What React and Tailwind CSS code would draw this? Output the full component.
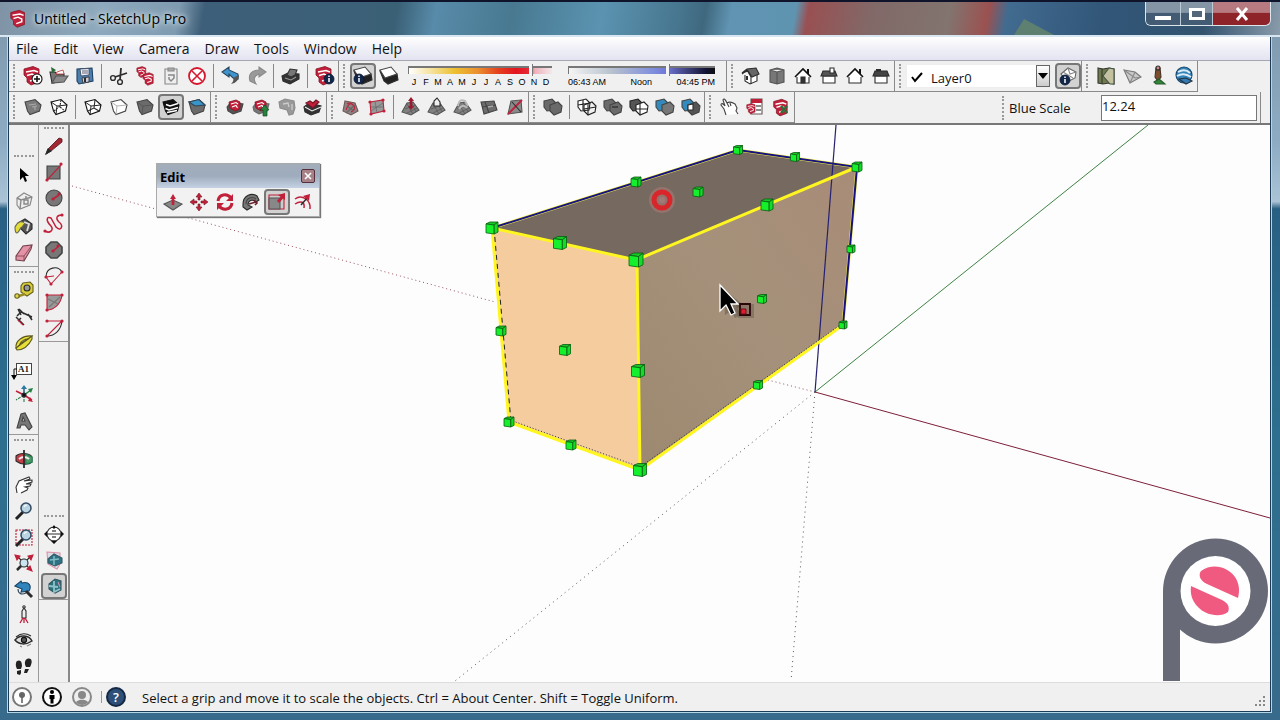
import React from "react";

const RED = "#c0203a";

const Svg = ({ children }) => (
  <svg viewBox="0 0 24 24" className="size-6 shrink-0" fill="none" stroke="#2c2c2c" strokeWidth="1.1" aria-hidden="true">
    {children}
  </svg>
);

const Slab = ({ fill = "#6b6b6b", line = "#444" }) => (
  <path d="M4 7 L14 4.500 L20 10 L18.500 16 L9 19.500 L6.500 16 Z" fill={fill} stroke={line} />
);
const SlabEdges = ({ line = "#333" }) => (
  <path d="M4 7 L10 11 L20 10 M10 11 L9 19.500" stroke={line} strokeWidth="0.9" />
);
const Mark = () => (
  <>
    <path d="M3 5 L12 2.5 L18 5 L18 18 L10 21 L6 18 L6 14 L3 11 Z" fill={RED} stroke="#851526" strokeWidth="0.8" />
    <path d="M5 8 L13 6.5 L17 8 M6 11.5 L11 10 L15 12 L15 15 L9 17" stroke="#fff" strokeWidth="1.6" />
  </>
);
const MiniMark = () => (
  <>
    <path d="M6 7 L13 5 L17 7 L17 14 L12 16 L7 13 Z" fill={RED} stroke="#851526" strokeWidth="0.8" />
    <path d="M8 9 L13 7.5 L15 9 M9 12 L13 10.5 L14.500 13" stroke="#fff" strokeWidth="1.1" />
  </>
);
const Badge = ({ x = 15, y = 15 }) => (
  <>
    <circle cx={x} cy={y} r="5" fill="#12264a" stroke="#0a1730" strokeWidth="0.8" />
    <path d={`M${x} ${y - 1} V${y + 3} M${x} ${y - 3.5} V${y - 2}`} stroke="#fff" strokeWidth="1.5" />
  </>
);
const Sheet = () => (
  <>
    <path d="M3 7 L7 17 L11 20 L21 16 L20 10 Z" fill="#222" />
    <path d="M3 6 L14 3 L20 10 L8 14 Z" fill="#fff" stroke="#444" />
  </>
);
const Terrain = () => (
  <>
    <path d="M3 17 L8 8 L14 7 L20 15 L12 20 Z" fill="#808080" stroke="#555" />
    <path d="M6 14 L17 10 M8 18 L18 13 M8 9 L14 19 M12 7 L17 17" stroke="#555" strokeWidth="0.7" />
  </>
);
const Twin = ({ a = "#6a6a6a", b = "#6a6a6a", line = "#444" }) => (
  <>
    <path d="M3 6 L11 4 L15 8 L14 15 L6 16 L3 12 Z" fill={a} stroke={line} />
    <path d="M9 10 L17 7 L21 11 L20 17 L13 20 L9 16 Z" fill={b} stroke={line} />
  </>
);
const Hand = () => (
  <path d="M9 20 L7 14 L4 10 C4 8 6 8 8 11 L6 5 C7 3 8 4 10 8 C13 6 15 7 18 9 L20 13 L19 16 L21 19 M10 8 L12 12 M13 8 L14 11" fill="#fff" stroke="#444" strokeWidth="1.1" />
);
const Pan = () => (
  <path d="M5 20 L4 14 L7 8 L17 4 L18 6 L12 8 L20 7 L20 9 L14 11 L19 11 L18 13 L13 14 L16 15 L15 17 L9 20" fill="#fff" stroke="#333" strokeWidth="1.1" />
);
const Lens = ({ x = 14, y = 9 }) => (
  <>
    <path d={`M${x - 3} ${y + 4} L${x - 10} ${y + 11}`} stroke="#222" strokeWidth="3" />
    <circle cx={x} cy={y} r="5" fill="#b9d4e3" stroke="#344a63" strokeWidth="1.5" />
    <path d={`M${x - 2} ${y - 1} q1 -2 3 -2`} stroke="#fff" />
  </>
);
const Dots = ({ pts }) => pts.map(([x, y]) => <circle key={`${x}-${y}`} cx={x} cy={y} r="1.6" fill={RED} stroke="none" />);
const House = ({ door }) => (
  <>
    <path d="M6 11 V19 H18 V11" fill="#fff" />
    <path d="M17 5 V10" stroke="#111" strokeWidth="2" />
    <path d="M4 13 L12 5 L20 13" fill="#fff" stroke="#111" strokeWidth="1.6" />
    {door && <path d="M10 19 V13 H14 V19 Z" fill={door} />}
  </>
);

const icons = {
  newDoc: <><Mark /><circle cx="16" cy="15" r="5" fill="#fff" stroke="#111" /><path d="M16 12 V18 M13 15 H19" stroke="#111" strokeWidth="1.6" /></>,
  open: <><path d="M3 8 H8 L10 10 H17 V12 L7 19 H5 Z" fill="#777" /><path d="M9 12 H21 L17 18 L5 19 Z" fill="#8b8b8b" stroke="#555" /><path d="M10 8 L16 6 L17 10 H9 Z" fill="#fff" stroke="#b33" strokeWidth="0.8" /><path d="M4 3 L9 6 L5 9 Z" fill="#286b35" stroke="none" /></>,
  save: <><path d="M4 5 L19 4 L20 17 L6 20 L4 17 Z" fill="#4d7fae" stroke="#1d3f63" /><path d="M7 5 L16 4.500 V11 L8 12 Z" fill="#eef" stroke="#345" strokeWidth="0.8" /><path d="M9 7 H15 M9 9 H15" strokeWidth="0.7" /><path d="M9 14 L16 13 V18 L10 19 Z" fill="#ccd" strokeWidth="0.8" /><path d="M12 14 V18" strokeWidth="2" /></>,
  cut: <><circle cx="6" cy="14" r="2.4" strokeWidth="1.4" /><circle cx="13" cy="18" r="2.4" strokeWidth="1.4" /><path d="M8 13 L20 9 M13 16 L14 4" strokeWidth="1.8" /></>,
  copy: <><g transform="translate(2 1) scale(.6)"><Mark /></g><g transform="translate(8 7) scale(.68)"><Mark /></g></>,
  paste: <g stroke="#888"><path d="M6 5 H18 V20 H6 Z" fill="#eee" /><path d="M9 7 H15 V4 H9 Z" fill="#aaa" /><path d="M9 11 H15 V14 L12 17 L10 15 V13" strokeWidth="1.5" /></g>,
  erase: <><circle cx="12" cy="12" r="8" fill="#fff" stroke="#d5192f" strokeWidth="1.8" /><path d="M7 7 L17 17 M17 7 L7 17" stroke="#d5192f" strokeWidth="1.6" /></>,
  undo: <><path d="M3 8 L10 3 L10 6 L19 10 L19 15 L14 14 L10 10 L10 13 Z" fill="#3f94cf" stroke="#29475f" /><path d="M14 14 L20 11 C20 16 17 19 12 20 C14 18 15 16 14 14 Z" fill="#555" stroke="none" /></>,
  redo: <path d="M21 8 L14 3 L14 6 C6 6 3 11 5 17 L11 20 C8 15 9 12 14 10 L14 13 Z" fill="#999" stroke="#8a8a8a" />,
  print: <><path d="M3 12 L9 9 L20 10 L20 15 L11 20 L4 17 Z" fill="#333" /><path d="M8 11 L11 5 L18 6 L16 11 L12 13 Z" fill="#777" stroke="#333" /><path d="M6 14 L12 16 L17 13" stroke="#999" strokeWidth="1.1" /></>,
  modelInfo: <><Mark /><Badge x={16} y={15} /></>,
  shadowInfo: <><Sheet /><Badge x={8} y={15} /></>,
  shadow: <Sheet />,
  iso: <><path d="M6 11 V17 L11 20 L18 17 V10" fill="#fff" /><path d="M3 9 L8 5 L17 4 L20 10 L13 13 L9 7 Z" fill="#666" /><path d="M3 10 L8 6 L12 13 M12 13 V20" /><path d="M8 12 V16" strokeWidth="2" /></>,
  top: <path d="M5 6 L12 4 L19 6 V18 L12 20 L5 18 Z M5 6 L12 8 L19 6 M12 8 V20" fill="#777" stroke="#555" />,
  front: <House door="#333" />,
  back: <><path d="M6 12 H18 V19 H6 Z" fill="#fff" /><path d="M4 12 L6 7 H18 L20 12 Z" fill="#555" /><path d="M13 4 H17 V9 H13 Z" fill="#fff" /></>,
  left: <House />,
  side: <><path d="M6 12 H18 V19 H6 Z" fill="#fff" /><path d="M4 12 L6 7 H18 L20 12 Z" fill="#444" /><path d="M7 6 H12" strokeWidth="2" /></>,
  layers: <><path d="M5 10 L12 4 L20 8 L19 14 L11 18 Z" fill="#fff" stroke="#666" /><path d="M7 8 L17 14 M12 4 L14 10 L20 8" stroke="#888" /><Badge x={9} y={16} /></>,
  map: <><path d="M4 4 L9 5 L15 4 L20 5 V20 L15 19 L9 20 L4 19 Z" fill="#707952" stroke="#30372b" /><path d="M15 4 L9 12 L16 20 H20 V5 Z" fill="#c3c19f" stroke="#454" /><path d="M8 5 V20" stroke="#303b25" /></>,
  terrain: <><path d="M4 6 L15 8 L21 13 L10 19 Z" fill="#c8c8c8" stroke="#777" /><path d="M4 6 L15 14 L21 13 M15 8 L10 19" stroke="#888" /></>,
  person: <><path d="M10 4 H14 L15 13 L12 17 L9 13 Z" fill="#7b4f2d" stroke="#432" /><circle cx="12" cy="4" r="2" fill="#c88" /><path d="M8 18 L13 15 L19 20 L10 20 Z" fill="#35863c" stroke="#265b2b" /></>,
  earth: <><circle cx="12" cy="11" r="8" fill="#3483b8" stroke="#15456b" /><path d="M6 8 Q13 4 18 9 M5 12 Q12 8 19 13" stroke="#dcecf5" strokeWidth="2" /><path d="M7 15 L14 14 L20 17 L14 20 Z" fill="#367ab0" stroke="#234" /></>,
  xray: <><Slab fill="#7b7b7b" /><path d="M8 10 L15 9 M11 12 L16 11 M14 12 V15" stroke="#aaa" /></>,
  backEdge: <><Slab fill="#fff" line="#111" /><SlabEdges line="#111" /><path d="M14 5 L13 11 L7 16 M13 12 L18 16" strokeDasharray="2 1" /></>,
  wire: <><Slab fill="#fff" line="#111" /><SlabEdges line="#111" /><path d="M14 5 L13 13 L7 16 M13 13 L18 16" /></>,
  hidden: <><Slab fill="#fff" /><SlabEdges line="#aaa" /></>,
  shaded: <><Slab /><SlabEdges line="#555" /></>,
  texture: <><Slab fill="#111" line="#111" /><path d="M7 9.500 L11 11 L19 8.500 M6.500 13.500 L10 15 L19 12.500 M8 17.500 L18 15.500" stroke="#fff" strokeWidth="1.4" /></>,
  mono: <><Slab /><path d="M4 7 L14 4.500 L20 10 L10 11 Z" fill="#3895c9" stroke="#345" /></>,
  getModel: <><path d="M4 12 L8 7 L20 9 L18 16 L10 19 L5 16 Z" fill="#555" stroke="#444" /><MiniMark /></>,
  share: <><path d="M4 12 L8 7 L20 9 L18 16 L10 19 L5 16 Z" fill="#777" stroke="#666" /><MiniMark /><path d="M14 21 V15 H11 L16 10 L20 15 H18 V21 Z" fill="#26813c" stroke="#164b25" strokeWidth="0.7" /></>,
  shareGray: <><path d="M4 7 L10 4 L19 6 L20 13 L18 19 L14 20 L12 15 L5 13 Z" fill="#999" stroke="#8c8c8c" /><path d="M8 9 L13 8 L14 12 M17 9 V15" stroke="#ccc" strokeWidth="1.3" /></>,
  ext: <><path d="M3 12 L8 8 L20 11 L18 17 L10 20 L4 17 Z" fill="#333" /><path d="M4 12 L11 16 L20 12" stroke="#eee" /><path d="M5 8 L9 6 L12 8 L15 5 L18 7 L12 13 Z" fill={RED} stroke="#731727" /></>,
  contours: <><path d="M6 6 L16 8 L19 16 L12 20 L4 16 Z" fill="#908383" stroke="#705757" /><path d="M7 15 Q10 6 14 10 Q18 14 12 17 M8 9 Q12 6 16 12" stroke={RED} /><path d="M8 11 L15 16 M7 18 L16 10" stroke="#666" /></>,
  scratch: <><path d="M5 7 L18 5 L19 16 L6 19 Z" fill="#999" stroke={RED} /><path d="M6 12 H19 M10 6 L12 18 M6 16 L18 8" stroke="#666" strokeWidth="0.7" /><Dots pts={[[5, 7], [18, 5], [19, 16], [6, 19]]} /></>,
  smoove: <><Terrain /><path d="M12 12 V6" stroke="#9c1930" strokeWidth="2.6" /><path d="M12 2 L15 6 H9 Z M12 15 L15 11 H9 Z" fill="#9c1930" stroke="none" /></>,
  stamp: <><Terrain /><path d="M9 11 V6 L12 3 L15 7 L15 11 Z" fill="#eee" /></>,
  drape: <><Terrain /><path d="M7 11 Q8 3 14 6 L17 11 M8 14 Q12 8 16 13" stroke="#bbb" strokeWidth="2" /></>,
  detail: <><path d="M4 7 L17 6 L20 15 L7 19 Z" fill="#6c6c6c" stroke="#444" /><path d="M5 12 L19 10 M8 7 L12 18" stroke="#444" /><path d="M11 12 L16 11" stroke="#aaa" strokeWidth="1.6" /></>,
  flip: <><path d="M8 6 L18 5 L19 17 L5 19 Z" fill="#8a8a8a" stroke="#555" /><path d="M5 19 L19 5" stroke={RED} strokeWidth="1.8" /><path d="M9 7 L18 17" /></>,
  outer: <Twin />,
  intersect: <><Twin a="#fff" b="none" line="#222" /><path d="M8 5 V15 M3 10 L15 8 M13 9 V20 M9 14 L21 12" stroke="#222" /></>,
  union: <><Twin /><path d="M11 12 H17" stroke="#222" /></>,
  subtract: <><Twin a="#555" b="#fff" line="#222" /><path d="M13 9 V20 M9 14 H21" stroke="#222" /></>,
  trim: <Twin a="#328abd" b="#777" />,
  split: <><Twin a="#328abd" b="#555" /><path d="M9 10 L14 9 V15 H9 Z" fill="#fff" /></>,
  hand: <Hand />,
  pan: <Pan />,
  options: <><path d="M8 4 H19 V19 H8 Z" fill="#fff" stroke="#655" /><path d="M8 6 H19" stroke={RED} strokeWidth="4" /><path d="M13 11 H18 M13 15 H18" stroke="#666" strokeWidth="1.4" /><g transform="translate(2 7) scale(.56)"><Mark /></g></>,
  attributes: <><g transform="translate(2 2) scale(.9)"><Mark /></g><path d="M12 11 L18 18 M18 11 L12 18" stroke="#356b3a" strokeWidth="2.600" /></>,
  pencil: <><path d="M4 20 L6 15 L17 4 L20 5 L20 8 L9 17 Z" fill="#a32633" stroke="#50151f" strokeWidth="0.8" /><path d="M4 20 L6 15 L9 17 Z" fill="#222" /></>,
  rect: <><path d="M5 6 H18 V19 H5 Z" fill="#777" stroke="#444" /><path d="M5 20 L19 5" stroke={RED} /><Dots pts={[[5, 20], [19, 4]]} /></>,
  circle: <><circle cx="12" cy="12" r="8" fill="#777" stroke="#444" /><path d="M11 13 L17 9" stroke={RED} strokeWidth="1.6" /><Dots pts={[[11, 13], [17, 8]]} /></>,
  polygon: <><path d="M9 4 H15 L20 9 V15 L15 20 H9 L4 15 V9 Z" fill="#777" stroke="#444" strokeWidth="1.600" /><path d="M11 13 L16 9" stroke={RED} strokeWidth="1.6" /><Dots pts={[[11, 13], [16, 8]]} /></>,
  freehand: <><path d="M3 19 C8 22 12 18 9 14 C3 8 5 4 9 6 L14 15 C19 20 22 14 17 10 C13 6 15 3 20 3" stroke={RED} strokeWidth="1.5" /><Dots pts={[[3, 19], [20, 3]]} /></>,
  arc: <><path d="M4 13 L9 20 L20 8 M4 13 L12 12" stroke={RED} /><path d="M4 13 C4 3 16 1 20 8" /><Dots pts={[[4, 13], [20, 8], [9, 20]]} /></>,
  pie: <><path d="M5 5 H20 C19 14 12 20 5 20 Z" fill="#999" stroke={RED} /><path d="M6 9 L16 14 M7 17 L18 7" stroke="#777" /><Dots pts={[[5, 5], [20, 5], [5, 20]]} /></>,
  arc2: <><path d="M5 5 H20 L5 20" stroke={RED} /><path d="M5 20 C13 20 19 14 20 5" /><Dots pts={[[5, 5], [20, 5], [5, 20]]} /></>,
  cursor: <path d="M8 5 V17 L11 14 L13 19 L15 18 L13 13 H17 Z" fill="#000" stroke="none" />,
  component: <><path d="M5 9 L12 4 L20 8 L18 16 L8 20 L5 16 Z" fill="#eee" stroke="#888" /><path d="M5 9 L9 11 L20 8 M9 11 L8 20" stroke="#888" strokeWidth="1.400" /><path d="M12 11 H16 V15 H12 Z M13 8 H15" stroke="#888" strokeWidth="1.400" /></>,
  paint: <><path d="M6 8 L13 4 L20 9 L20 14 L14 19 L9 14 Z" fill="#555" /><path d="M3 12 C6 6 9 6 13 8 L10 12 C7 13 8 17 5 18 C3 18 3 15 3 12 Z" fill="#e4dc38" stroke="#665" /><path d="M12 7 L17 9 L15 16" stroke="#ddd" strokeWidth="1.8" /></>,
  eraser: <><path d="M4 15 L11 5 L20 4 L19 8 L12 20 L4 19 Z" fill="#e493a6" stroke="#73404d" /><path d="M4 15 L12 15 L20 4 M12 15 V20" stroke="#73404d" strokeWidth="0.8" /></>,
  tape: <><path d="M11 4 L18 3 L21 6 V13 L15 17 L9 13 V7 Z" fill="#d9ce36" stroke="#665f20" /><circle cx="15" cy="9" r="3" fill="#999" /><path d="M13 15 L4 18" stroke="#978c25" strokeWidth="2.500" /><circle cx="5" cy="17" r="2.200" fill="#e1d84b" stroke="#665f20" /></>,
  dimension: <><path d="M5 11 L9 7 L20 12 M16 9 L20 15 M7 4 L12 9 M9 10 L6 4" strokeWidth="1.500" /><path d="M4 12 L12 20 M6 16 L9 13" strokeWidth="1.500" /><path d="M6 15 L11 20" stroke={RED} /></>,
  protractor: <><path d="M4 17 C3 10 11 4 20 5 Z" fill="#e7df38" stroke="#5d591d" /><path d="M4 17 L20 5 L20 8 C17 14 12 19 5 19 Z" fill="#e7df38" stroke="#5d591d" /><path d="M8 13 C9 10 13 8 16 8 Z" fill="#fff" stroke="#5d591d" /></>,
  axes: <><path d="M12 12 V20 M12 12 L4 17" stroke="#268049" strokeDasharray="3 1" /><path d="M12 12 V4" stroke="#245f83" strokeWidth="1.500" /><path d="M12 12 L20 17 M12 12 L4 8" stroke={RED} strokeWidth="1.500" /><path d="M12 12 L19 7" stroke="#238042" strokeWidth="1.500" /><path d="M12 2 L15 6 H9 Z" fill="#287aa4" stroke="none" /><path d="M21 19 L16 18 L18 14 Z" fill={RED} stroke="none" /><path d="M21 5 L19 10 L16 6 Z" fill="#238042" stroke="none" /><circle cx="12" cy="12" r="2" fill="#111" /></>,
  solidLetter: <path fillRule="evenodd" d="M5 19 L9 5 L13 4 L20 18 L17 21 L13 16 L9 16 L8 19 Z M10 12 L13 12 L11 8 Z" fill="#777" stroke="#444" />,
  orbit: <><path d="M4 9 C8 5 18 6 20 10 V15 C17 18 9 18 4 14 Z" fill="#c23f49" /><path d="M13 7 L20 10 V15 L14 17 Z" fill="#4b9a67" stroke="#285" /><path d="M7 12 Q12 8 17 12" stroke="#eee" strokeWidth="2" /><path d="M12 3 V21" strokeWidth="1.8" /></>,
  zoom: <Lens />,
  zoomWin: <><path d="M4 5 H20 V20 H4 Z" stroke={RED} strokeDasharray="2 1" /><Lens x={14} y={10} /></>,
  zoomExt: <><path d="M5 5 L19 19 M19 5 L5 19" /><circle cx="12" cy="12" r="4" fill="#cce3f0" /><path d="M3 4 L8 5 L5 9 Z M21 4 L16 5 L19 9 Z M20 20 L15 18 L18 15 Z" fill={RED} stroke={RED} /><path d="M9 15 L5 19" strokeWidth="2.500" /></>,
  previous: <><path d="M3 9 L9 4 L10 6 C17 4 20 9 17 14 L9 15 L10 12 Z" fill="#3284bd" stroke="#194465" /><path d="M6 12 C6 17 10 18 14 16" stroke="#345" /><path d="M14 14 L20 20" strokeWidth="3" /></>,
  camera: <><circle cx="12" cy="4" r="1.2" /><path d="M10 8 L12 5 L14 8 V15 H10 Z" fill="#eee" /><path d="M11 15 L8 20 M13 15 L16 20 M12 15 V20" stroke={RED} strokeWidth="1.3" /></>,
  eye: <><path d="M3 11 C8 5 17 6 20 12 C14 16 7 16 3 11 Z" fill="#ddd" strokeWidth="1.500" /><circle cx="12" cy="11" r="2.600" fill="#555" stroke="#111" /><path d="M4 8 Q11 2 19 7" /><path d="M8 17 L10 18 M15 17 L19 15" stroke="#888" /></>,
  walk: <g fill="#222" stroke="none"><path d="M5 6 C9 4 10 8 10 11 L9 14 L5 14 C3 10 4 7 5 6 Z M5 16 L9 15 V18 L8 20 L5 19 Z M15 4 C20 2 21 7 18 12 L14 12 C12 8 13 5 15 4 Z M13 14 L17 14 L15 18 H12 Z" /></g>,
  section: <><circle cx="12" cy="12" r="7" fill="#fff" /><path d="M4 12 H20 M12 4 V7 M12 18 V20" strokeWidth="1.2" /><path d="M2 12 L5 9 V15 Z M22 12 L19 9 V15 Z M12 3 L10 6 H14 Z M12 22 L9 19 H15 Z" fill="#111" stroke="none" /><path d="M10 9 H14 M10 15 H14" strokeWidth="1.500" stroke="#555" /></>,
  plane: <><path d="M5 4 L18 5 V16 L15 21 L6 16 Z" fill="#dcdce6" stroke="#df91a5" /><path d="M6 11 L12 6 L20 10 V15 L13 18 L6 15 Z" fill="#2f7180" stroke="#355a69" /><path d="M12 8 V17 M8 12 L17 11" stroke="#7dbbc5" strokeWidth="1.500" /></>,
  sectionCut: <><path d="M7 10 L13 5 L19 7 V16 L13 19 L7 15 Z" fill="#2b7280" stroke="#315660" /><path d="M12 7 V18 L18 15 M7 12 L16 13" stroke="#8fc2c6" strokeWidth="1.800" /><path d="M16 8 L18 13" stroke="#d58dab" /></>,
  pushPull: <><path d="M3 14 L12 10 L21 14 L12 20 Z" fill="#888" stroke="#555" /><path d="M12 15 V8" stroke={RED} strokeWidth="2.600" /><path d="M12 4 L15 9 H9 Z" fill={RED} stroke="none" /></>,
  move: <g fill={RED} stroke="#731727" strokeWidth="0.6"><path d="M12 3 L15 7 H13 V10 H11 V7 H9 Z M12 21 L9 17 H11 V14 H13 V17 H15 Z M3 12 L7 9 V11 H10 V13 H7 V15 Z M21 12 L17 15 V13 H14 V11 H17 V9 Z" /></g>,
  rotate: <><path d="M5 11 C6 4 14 3 18 8 M19 13 C18 20 10 21 6 16" stroke={RED} strokeWidth="3" /><path d="M20 4 V11 H13 Z M4 20 V13 H11 Z" fill={RED} stroke="none" /></>,
  follow: <><path d="M4 14 C4 6 12 2 18 6 L20 10 L17 12 C13 8 9 11 9 15 L13 17 L8 20 L4 17 Z" fill="#777" /><path d="M7 14 C7 8 13 6 17 9" stroke="#444" /><path d="M10 14 L17 12 M15 10 L18 13 L16 15" stroke="#6c202b" strokeWidth="1.600" /></>,
  scale: <><path d="M4 5 H19 V19 H4 Z" fill="#ccc" stroke={RED} /><path d="M4 8 H15 V19 H4 Z" fill="#888" stroke="#555" /><path d="M13 12 L19 5" stroke={RED} strokeWidth="3" /><path d="M20 3 V10 L13 5 Z" fill={RED} stroke="none" /></>,
  offset: <><path d="M4 9 C11 4 20 10 19 19 M4 14 C10 10 14 12 13 18" stroke={RED} strokeWidth="1.500" /><path d="M10 15 L17 7" strokeWidth="1.500" /><path d="M19 4 L18 11 L12 6 Z" fill={RED} stroke="none" /></>,
};

function Tool({ name, active = false }) {
  return (
    <button
      type="button"
      aria-label={name}
      aria-pressed={active}
      className={
        active
          ? "flex size-[26px] shrink-0 items-center justify-center rounded-sm border-2 border-[#777] bg-[#d2d2d2]"
          : "flex size-[26px] shrink-0 items-center justify-center"
      }
    >
      <Svg>{icons[name]}</Svg>
    </button>
  );
}

const Grip = () => <div className="mx-1 h-6 w-[3px] shrink-0 border-l-2 border-dotted border-[#999]" />;
const GripFlat = ({ tight }) => (
  <div className={(tight ? "mt-[2px] mb-1" : "mt-1 mb-[5px]") + " h-[2px] w-5 border-t-2 border-dotted border-[#999]"} />
);
const Sep = () => <div className="mx-[3px] h-6 w-[2px] shrink-0 border-l border-[#888]" />;

function Group({ tools, active, children }) {
  return (
    <div className="flex shrink-0 items-center border-r border-b border-[#8a8a8a]">
      <Grip />
      {tools && tools.map((t, i) => (t === "|" ? <Sep key={i} /> : <Tool key={i} name={t} active={t === active} />))}
      {children}
    </div>
  );
}

const sliderBase =
  "block h-3 w-full appearance-none bg-transparent [&::-webkit-slider-runnable-track]:h-2 [&::-webkit-slider-runnable-track]:border-t-2 [&::-webkit-slider-runnable-track]:border-l [&::-webkit-slider-runnable-track]:border-[#777] [&::-webkit-slider-thumb]:-mt-1 [&::-webkit-slider-thumb]:h-3 [&::-webkit-slider-thumb]:w-1 [&::-webkit-slider-thumb]:appearance-none [&::-webkit-slider-thumb]:border-r [&::-webkit-slider-thumb]:border-[#777] [&::-webkit-slider-thumb]:bg-[#f4f4f4]";

function Sliders() {
  return (
    <div className="flex gap-4 pr-[11px] pl-[6px] font-['Liberation_Sans',sans-serif] text-[9px] leading-3 font-medium text-black">
      <div className="w-36">
        <input
          type="range"
          aria-label="Date"
          min="0"
          max="100"
          defaultValue="86"
          className={sliderBase + " [&::-webkit-slider-runnable-track]:bg-[linear-gradient(90deg,#fff,#f5e3a0_15%,#ecc030_32%,#ea9030_48%,#e5431f_62%,#e3141f_75%,#e52a36_84%,#efb0ba_88%,#f3e8ea)]"}
        />
        <div className="flex">
          {"JFMAMJJASOND".split("").map((m, i) => (
            <span key={i} className="w-3 text-center">{m}</span>
          ))}
        </div>
      </div>
      <div className="w-[147px]">
        <input
          type="range"
          aria-label="Time"
          min="0"
          max="100"
          defaultValue="68"
          className={sliderBase + " [&::-webkit-slider-runnable-track]:bg-[linear-gradient(90deg,#f4f4f4,#b5c0cd_30%,#7f8ddd_58%,#7076d8_67%,#5356a0_75%,#111332_94%,#111)]"}
        />
        <div className="flex justify-between">
          <span>06:43 AM</span>
          <span>Noon</span>
          <span>04:45 PM</span>
        </div>
      </div>
    </div>
  );
}

function TitleBar() {
  return (
    <header className="relative flex h-[37px] items-center border-t-2 border-b-2 border-t-[#10142b] border-b-[#d7e6f0] bg-[linear-gradient(100deg,#7f93a5_0%,#8ea9bd_8%,#7f9bb0_14%,#3e5f79_16%,#3a6076_31%,#588ba9_34%,#487991_40%,#5b93b0_47%,#47768f_53%,#3f687e_55%,#6094b2_57%,#5f94b1_62%,#995052_63%,#816968_68%,#82746f_74%,#9b5150_77%,#426b90_78.500%,#315678_86%,#33536f_94%,#8a9cab_100%)] pl-[8px]">
      <svg viewBox="0 0 24 24" className="size-[22px]" fill="none" aria-hidden="true"><Mark /></svg>
      <h1 className="ml-1 text-[14px] leading-5 text-black [text-shadow:0_0_8px_#fff,0_0_4px_#dfe9ef]">Untitled - SketchUp Pro</h1>
      <svg viewBox="0 0 40 16" className="absolute right-[226px] bottom-0 h-4 w-10" aria-hidden="true"><path d="M0 16 L10 0 L40 16 Z" fill="#5d8070" /></svg>
      <div className="absolute top-0 right-[9px] flex h-6 overflow-hidden rounded-b-md border border-t-0 border-[#dce6ed]">
        <button type="button" aria-label="Minimize" className="flex w-[35px] items-center justify-center border-r border-[#bccbd6] bg-linear-to-b from-[#8495a5] from-45% to-[#435c73] to-50%">
          <span className="mt-2 h-1 w-4 bg-white" />
        </button>
        <button type="button" aria-label="Maximize" className="flex w-8 items-center justify-center border-r border-[#bccbd6] bg-linear-to-b from-[#8495a5] from-45% to-[#435c73] to-50%">
          <span className="h-3 w-4 border-[3px] border-white bg-[#526779]" />
        </button>
        <button type="button" aria-label="Close" className="flex w-[57px] items-center justify-center bg-linear-to-b from-[#b77a80] from-45% to-[#8e2429] to-50%">
          <svg viewBox="0 0 16 14" className="h-[14px] w-4" aria-hidden="true"><path d="M3 1 L13 13 M13 1 L3 13" stroke="#fff" strokeWidth="3" /></svg>
        </button>
      </div>
    </header>
  );
}

const grips = [
  [738, 150, 9], [795, 157, 9], [636, 182, 10], [698, 192, 10], [857, 167, 10], [492, 228, 12], [560, 243, 13], [767, 205, 12],
  [636, 260, 14], [851, 249, 8], [843, 325, 8], [762, 299, 9], [758, 385, 9], [501, 331, 10], [565, 350, 11], [638, 371, 13],
  [509, 422, 10], [571, 445, 10], [640, 470, 13],
];

function ScaleGrip({ x, y, s }) {
  const l = x - s / 2;
  const t = y - s / 2;
  const w = s * 0.68;
  const d = s * 0.32;
  const e = s * 0.16;
  return (
    <g stroke="#075c10" strokeWidth="0.8" strokeLinejoin="round">
      <path d={`M${l} ${t + e} L${l + d} ${t} H${l + s} L${l + w} ${t + e * 1.6} Z`} fill="#19c628" />
      <path d={`M${l} ${t + e} L${l + w} ${t + e * 1.6} V${t + s} L${l} ${t + s - e * 0.6} Z`} fill="#14f02b" />
      <path d={`M${l + w} ${t + e * 1.6} L${l + s} ${t} V${t + s - e} L${l + w} ${t + s} Z`} fill="#12dc28" />
    </g>
  );
}

function Scene() {
  return (
    <svg viewBox="70 125 1200 557" className="absolute inset-0 h-full w-full" fill="none" role="img" aria-label="Box being scaled">
      <defs>
        <linearGradient id="side" x1="0" y1="1" x2="1" y2="0">
          <stop offset="0" stopColor="#9d896f" />
          <stop offset="0.5" stopColor="#a5917b" />
          <stop offset="1" stopColor="#a88c78" />
        </linearGradient>
      </defs>
      <path d="M72 186 L495 302 M760 378 L815 392" stroke="#96525c" strokeDasharray="1 3" />
      <path d="M815 392 L455 681 M815 392 L791 681" stroke="#555" strokeDasharray="1 4" />
      <path d="M815 392 L1148 125" stroke="#3c8343" />
      <path d="M815 392 L1270 518" stroke="#7d1f39" />
      <path d="M492 228 L738 150 L857 167 L636 260 Z" fill="#766960" />
      <path d="M492 228 L636 260 L640 470 L509 422 Z" fill="#f4cc9d" />
      <path d="M636 260 L857 167 L843 325 L640 470 Z" fill="url(#side)" />
      <path d="M492 228 L738 150 L857 167 L843 325" stroke="#f1f04a" strokeWidth="3" />
      <path d="M492 228 L738 150 L857 167 L843 325" stroke="#17127d" strokeWidth="2" />
      <path d="M836 125 L815 392" stroke="#252071" strokeWidth="1.2" />
      <path d="M492 228 L636 260 L857 167 M637 260 L640 470 M492 228 L509 422 L640 470 L843 325" stroke="#fff521" strokeWidth="3" strokeLinejoin="round" />
      <path d="M494 228 L511 422" stroke="#222" strokeDasharray="5 4" />
      <path d="M510 420 L640 467 L843 323" stroke="#333" strokeDasharray="1 2" />
      {grips.map(([x, y, s]) => (
        <ScaleGrip key={`${x}-${y}`} x={x} y={y} s={s} />
      ))}
      <circle cx="662" cy="200" r="13" fill="#b17d77" opacity="0.5" />
      <circle cx="662" cy="200" r="8" stroke="#d8262b" strokeWidth="5" />
      <circle cx="662" cy="200" r="3" fill="#a07b77" />
      <path d="M724 290 L725 315 L731 311 L735 318 L741 315 L737 308 L745 306 Z" fill="#5d5146" opacity="0.5" />
      <path d="M736 304 H754 V318 H738 Z" fill="#5d5146" opacity="0.4" />
      <path d="M720 285 V311 L726 305 L731 315 L735 313 L731 304 H738 Z" fill="#000" stroke="#fff" strokeWidth="1.3" />
      <path d="M740 304 H750 V315 H740 Z" fill="#8d7667" stroke="#2a0709" strokeWidth="1.8" />
      <path d="M741 309 H746 V314 H741 Z" fill="#e01e30" stroke="#6b1018" />
    </svg>
  );
}

function EditPalette() {
  return (
    <section className="absolute top-[38px] left-[86px] border border-[#aaa] bg-[#f2f2f2] shadow-[1px_1px_1px_#777]">
      <div className="flex h-6 items-center justify-between bg-linear-to-b from-[#a2adb9] via-[#9eacbe] to-[#c4d2e3] pr-1 pl-[3px]">
        <h2 className="pt-[2px] text-[13px] leading-5 font-bold text-black">Edit</h2>
        <button type="button" aria-label="Close palette" className="flex size-[14px] items-center justify-center rounded-xs border border-[#54313b] bg-[#a78088]">
          <svg viewBox="0 0 8 8" className="size-2" aria-hidden="true"><path d="M1 1 L7 7 M7 1 L1 7" stroke="#fff" strokeWidth="1.6" /></svg>
        </button>
      </div>
      <div className="flex h-7 items-center px-[3px]">
        {["pushPull", "move", "rotate", "follow", "scale", "offset"].map((t) => (
          <Tool key={t} name={t} active={t === "scale"} />
        ))}
      </div>
    </section>
  );
}

function Watermark() {
  return (
    <svg viewBox="0 0 108 144" className="absolute right-0 bottom-0 h-36 w-[108px]" aria-hidden="true">
      <path d="M1 53 H18 V143 H1 Z" fill="#686b77" />
      <circle cx="53.500" cy="53" r="52.500" fill="#686b77" />
      <circle cx="53.500" cy="53" r="35" fill="#fff" />
      <path d="M39 33 C50 25 65 28 73 39 C77 45 78 52 76 60 L45 46 C38 43 36 37 39 33 Z" fill="#f15a80" />
      <path d="M29 48 L60 62 C66 65 68 69 66 74 C58 80 43 77 36 69 C30 63 28 56 29 48 Z" fill="#f15a80" />
    </svg>
  );
}

function TextButton({ name }) {
  return (
    <button type="button" aria-label={name} className="flex size-[26px] items-center justify-center">
      <span className="relative flex h-3 w-4 items-center justify-center border border-[#444] bg-white font-['Liberation_Serif',serif] text-[9px] leading-3 font-bold text-[#222]">
        A1
        <svg viewBox="0 0 6 12" className="absolute top-1 -left-1.5 h-3 w-1.5" aria-hidden="true"><path d="M6 1 H3 V7" stroke="#111" fill="none" /><path d="M0 7 H6 L3 12 Z" /></svg>
      </span>
    </button>
  );
}

const statusButton = "flex size-5 items-center justify-center rounded-full border-2";

export default function App() {
  return (
    <div className="flex min-h-screen flex-col bg-[#111a30] font-['Open_Sans','Noto_Sans',sans-serif] text-[#111]">
      <div className="flex grow flex-col bg-[linear-gradient(180deg,#7d96aa_0%,#8dacc4_20%,#aac3d6_28%,#286083_29%,#2d6f8e_60%,#386a8b_100%)]">
        <TitleBar />
        <div className="mr-[9px] mb-2 ml-2 flex grow flex-col border border-t-0 border-[#1d3a56] bg-[#f0f0f0] outline outline-[#b5d6e6]">
          <nav className="flex h-6 items-center gap-px border-b border-[#a5a7b0] bg-linear-to-b from-white via-[#f1f1f8] via-45% to-[#e3e4f0]">
            {["File", "Edit", "View", "Camera", "Draw", "Tools", "Window", "Help"].map((m) => (
              <button key={m} type="button" className="px-[7px] text-[14px] leading-5">{m}</button>
            ))}
          </nav>
          <div className="flex h-[31px]">
            <Group tools={["newDoc", "open", "save", "|", "cut", "copy", "paste", "erase", "|", "undo", "redo", "|", "print", "|", "modelInfo"]} />
            <Group tools={["shadowInfo", "shadow"]} active="shadowInfo"><Sliders /></Group>
            <Group tools={["iso", "top", "front", "back", "left", "side"]} />
            <Group>
              <div className="relative mr-1 h-6 w-[145px] border border-[#eee] bg-white">
                <select aria-label="Layer" className="h-full w-full appearance-none pl-[24px] text-[13px] leading-5 outline-none">
                  <option>Layer0</option>
                </select>
                <svg viewBox="0 0 12 12" className="pointer-events-none absolute top-1.5 left-1 size-3" aria-hidden="true"><path d="M1 6 L4 10 L11 2" stroke="#000" strokeWidth="2" fill="none" /></svg>
                <span className="pointer-events-none absolute inset-y-0 right-0 flex w-[14px] items-center justify-center border border-[#666] bg-linear-to-b from-white to-[#ccc]">
                  <svg viewBox="0 0 10 6" className="h-1.5 w-2.5" aria-hidden="true"><path d="M0 0 H10 L5 6 Z" /></svg>
                </span>
              </div>
              <Tool name="layers" active />
            </Group>
            <Group tools={["map", "terrain", "person", "earth"]} />
          </div>
          <div className="flex h-[33px] border-b-2 border-[#777]">
            <Group tools={["xray", "backEdge", "|", "wire", "hidden", "shaded", "texture", "mono"]} active="texture" />
            <Group tools={["getModel", "share", "shareGray", "ext"]} />
            <Group tools={["contours", "scratch", "|", "smoove", "stamp", "drape", "detail", "flip"]} />
            <Group tools={["outer", "|", "intersect", "union", "subtract", "trim", "split"]} />
            <Group tools={["hand", "options", "attributes"]} />
            <div className="mr-[9px] ml-auto flex items-center border-r border-[#8a8a8a] pr-[3px]">
              <Grip />
              <label htmlFor="measure" className="w-[92px] text-[13px] leading-5">Blue Scale</label>
              <input id="measure" type="text" defaultValue="12.24" className="h-[26px] w-[156px] border border-[#777] bg-white pb-1 text-[13px] leading-5 outline-none" />
            </div>
          </div>
          <main className="flex grow">
            <aside className="flex w-[30px] shrink-0 flex-col border-r border-[#999] pt-[26px]">
              <div className="flex flex-col items-center border-b border-[#999]">
                <GripFlat />
                {["cursor", "component", "paint", "eraser"].map((t) => <Tool key={t} name={t} />)}
              </div>
              <div className="flex flex-col items-center border-b border-[#999]">
                <GripFlat />
                {["tape", "dimension", "protractor"].map((t) => <Tool key={t} name={t} />)}
                <TextButton name="Text" />
                {["axes", "solidLetter"].map((t) => <Tool key={t} name={t} />)}
              </div>
              <div className="flex flex-col items-center">
                <GripFlat />
                {["orbit", "pan", "zoom", "zoomWin", "zoomExt", "previous", "camera", "eye", "walk"].map((t) => <Tool key={t} name={t} />)}
              </div>
            </aside>
            <aside className="flex w-[31px] shrink-0 flex-col border-r-2 border-[#888]">
              <div className="flex flex-col items-center border-b border-[#999]">
                <GripFlat tight />
                {["pencil", "rect", "circle", "freehand", "polygon", "arc", "pie", "arc2"].map((t) => <Tool key={t} name={t} />)}
              </div>
              <div className="mt-auto mb-[82px] flex flex-col items-center border-b border-[#999]">
                <GripFlat tight />
                <Tool name="section" />
                <Tool name="plane" />
                <Tool name="sectionCut" active />
              </div>
            </aside>
            <div className="relative grow overflow-hidden bg-[#fdfdfd]">
              <Scene />
              <EditPalette />
              <Watermark />
            </div>
          </main>
          <footer className="flex h-[29px] items-center border-t border-[#ddd] pl-[3px]">
            <button type="button" aria-label="Geo-location" className={statusButton + " border-[#777] bg-white"}>
              <svg viewBox="0 0 16 16" className="size-4" aria-hidden="true"><circle cx="8" cy="6" r="3" fill="#666" /><path d="M8 6 V14" stroke="#666" strokeWidth="1.6" /></svg>
            </button>
            <button type="button" aria-label="Credits" className={statusButton + " ml-[10px] border-[#111] bg-white"}>
              <svg viewBox="0 0 16 16" className="size-4" aria-hidden="true"><circle cx="8" cy="3" r="2" /><path d="M5.500 6 H10.500 V10 H9.500 V14.500 H6.500 V10 H5.500 Z" /></svg>
            </button>
            <button type="button" aria-label="Sign in" className={statusButton + " ml-[10px] overflow-hidden border-[#888] bg-[#eee]"}>
              <svg viewBox="0 0 16 16" className="size-4" aria-hidden="true"><circle cx="8" cy="6" r="4" fill="#888" /><path d="M1 16 C1 9 15 9 15 16 Z" fill="#888" /></svg>
            </button>
            <span className="ml-[9px] h-3 w-1 border-l border-[#999]" />
            <button type="button" aria-label="Help" className={statusButton + " ml-[1px] border-[#142844] bg-[#2d4f78] text-[13px] leading-4 font-semibold text-white"}>?</button>
            <p className="ml-4 pt-[2px] text-[13px] leading-5">Select a grip and move it to scale the objects. Ctrl = About Center. Shift = Toggle Uniform.</p>
            <svg viewBox="0 0 12 12" className="mr-1 mb-1 ml-auto size-3 self-end" aria-hidden="true"><path d="M9 1 h2 v2 h-2 Z M9 5 h2 v2 h-2 Z M9 9 h2 v2 h-2 Z M5 5 h2 v2 h-2 Z M5 9 h2 v2 h-2 Z M1 9 h2 v2 h-2 Z" fill="#888" /></svg>
          </footer>
        </div>
      </div>
    </div>
  );
}
